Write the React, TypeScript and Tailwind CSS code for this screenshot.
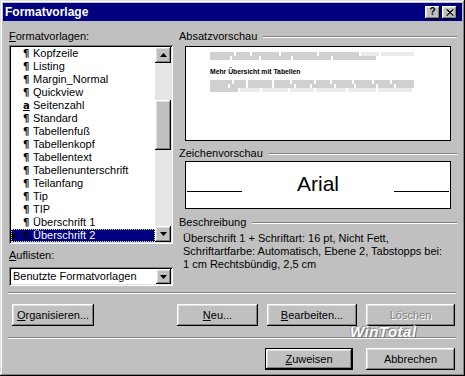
import React from 'react';

// Win9x bevels, written out in full so Tailwind picks them up.
const raised = 'bg-[#c0c0c0] shadow-[inset_-1px_-1px_#000,inset_1px_1px_#fff,inset_-2px_-2px_#808080,inset_2px_2px_#dfdfdf]';
const sunken = 'shadow-[inset_1px_1px_#808080,inset_-1px_-1px_#fff,inset_2px_2px_#000,inset_-2px_-2px_#dfdfdf]';

type Style = { name: string; kind: 'p' | 'a'; selected?: boolean };

const styles: Style[] = [
  { name: 'Kopfzeile', kind: 'p' },
  { name: 'Listing', kind: 'p' },
  { name: 'Margin_Normal', kind: 'p' },
  { name: 'Quickview', kind: 'p' },
  { name: 'Seitenzahl', kind: 'a' },
  { name: 'Standard', kind: 'p' },
  { name: 'Tabellenfuß', kind: 'p' },
  { name: 'Tabellenkopf', kind: 'p' },
  { name: 'Tabellentext', kind: 'p' },
  { name: 'Tabellenunterschrift', kind: 'p' },
  { name: 'Teilanfang', kind: 'p' },
  { name: 'Tip', kind: 'p' },
  { name: 'TIP', kind: 'p' },
  { name: 'Überschrift 1', kind: 'p' },
  { name: 'Überschrift 2', kind: 'p', selected: true },
];

// Greeked text in the paragraph preview: [width, dark?]
const greek: [number, boolean][][] = [
  [[24, true], [14, true], [27, true], [36, true], [40, true], [18, false], [33, false]],
  [[20, true], [27, true], [30, true], [38, true], [43, true]],
];
const greekAfter: [number, boolean][][] = [
  [[22, true], [12, true], [24, true], [16, true], [22, true], [14, true], [20, true], [18, true], [16, true], [22, true]],
  [[18, true], [16, true], [24, true], [20, true], [14, true], [22, true], [18, true], [20, true], [16, true], [18, true]],
  [[28, true], [20, false], [26, false], [24, false], [30, false], [28, false], [34, false]],
];

const GreekRow = ({ segs }: { segs: [number, boolean][] }) => (
  <div className="flex h-[4px] gap-[2px]">
    {segs.map(([w, dark], i) => (
      <div key={i} className={dark ? 'h-full bg-[#d0d0d0]' : 'h-full bg-[#ebebeb]'} style={{ width: w }} />
    ))}
  </div>
);

const ArrowUp = () => (
  <svg width="7" height="4" viewBox="0 0 7 4"><polygon points="3.5,0 7,4 0,4" fill="#000" /></svg>
);
const ArrowDown = () => (
  <svg width="7" height="4" viewBox="0 0 7 4"><polygon points="0,0 7,0 3.5,4" fill="#000" /></svg>
);

const GroupLabel = ({ text }: { text: string }) => (
  <div className="flex h-[13px] items-center leading-[13px]">
    <span>{text}</span>
    <div className="ml-[6px] h-[2px] flex-1 border-t border-b border-t-[#808080] border-b-white" />
  </div>
);

const Button = ({ children, w, disabled, isDefault }: { children: React.ReactNode; w: number; disabled?: boolean; isDefault?: boolean }) => (
  <div
    className={isDefault ? 'flex h-[22px] border border-black' : 'flex h-[22px]'}
    style={{ width: w }}
  >
    <div
      className={`${raised} flex flex-1 items-center justify-center ${disabled ? 'text-[#808080] [text-shadow:1px_1px_0_#fff]' : 'text-black'}`}
    >
      {children}
    </div>
  </div>
);

const Separator = () => <div className="ml-[5px] h-[2px] w-[448px] border-t border-b border-t-[#808080] border-b-white" />;

export default function App() {
  return (
    <div className="relative h-[376px] w-[465px] bg-[#c0c0c0] p-[3px] font-['Liberation_Sans',Arial,sans-serif] text-[11px] text-black shadow-[inset_-1px_-1px_#000,inset_1px_1px_#dfdfdf,inset_-2px_-2px_#808080,inset_2px_2px_#fff]">
      {/* Title bar */}
      <div className="flex h-[18px] items-center bg-[#000080] pl-[2px] pr-[5px]">
        <span className="flex-1 text-[12px] font-bold leading-[18px] text-white">Formatvorlage</span>
        <div className={`${raised} flex h-[13px] w-[15px] items-center justify-center text-[10px] font-bold leading-none`}>?</div>
        <div className={`${raised} ml-[2px] flex h-[13px] w-[15px] items-center justify-center`}>
          <svg width="8" height="7" viewBox="0 0 8 7">
            <path d="M0.5 0.5 L7 6.5 M1.5 0.5 L7.5 6.5 M7 0.5 L0.5 6.5 M7.5 0.5 L1 6.5" stroke="#000" strokeWidth="1" />
          </svg>
        </div>
      </div>

      {/* Body */}
      <div className="flex items-start pl-[6px] pt-[9px]">
        {/* Left column */}
        <div className="w-[164px]">
          <div className="h-[13px] leading-[13px]"><span className="underline">F</span>ormatvorlagen:</div>
          <div className={`${sunken} mt-[2px] flex h-[199px] bg-white p-[2px]`}>
            <div className="w-[144px]">
              {styles.map((s) => (
                <div
                  key={s.name}
                  className={s.selected ? 'flex h-[13px] items-center bg-[#000080] leading-[13px] text-white outline-1 -outline-offset-1 outline-dotted outline-[#e8e860]' : 'flex h-[13px] items-center leading-[13px]'}
                >
                  <div className="flex w-[12px] items-center pl-[1px]">
                    {s.selected && <div className="h-0 w-0 border-y-[4px] border-l-[5px] border-y-transparent border-l-black" />}
                  </div>
                  <div className={s.selected ? "w-[10px] font-['DejaVu_Sans',sans-serif] text-[10px] font-bold text-black" : "w-[10px] font-['DejaVu_Sans',sans-serif] text-[10px] font-bold"}>
                    {s.kind === 'p' ? '¶' : <span className="underline">a</span>}
                  </div>
                  <span className="whitespace-nowrap">{s.name}</span>
                </div>
              ))}
            </div>
            {/* Scrollbar */}
            <div className="flex w-[16px] flex-col bg-[#e6e6e6]">
              <div className={`${raised} flex h-[16px] items-center justify-center`}><ArrowUp /></div>
              <div className="h-[37px]" />
              <div className={`${raised} h-[50px]`} />
              <div className="flex-1" />
              <div className={`${raised} flex h-[16px] items-center justify-center`}><ArrowDown /></div>
            </div>
          </div>
          <div className="mt-[5px] h-[13px] leading-[13px]"><span className="underline">A</span>uflisten:</div>
          <div className={`${sunken} mt-[5px] flex h-[19px] items-center bg-white p-[2px]`}>
            <span className="flex-1 pl-[2px] leading-[13px]">Benutzte Formatvorlagen</span>
            <div className={`${raised} flex h-full w-[15px] items-center justify-center`}><ArrowDown /></div>
          </div>
        </div>

        {/* Right column */}
        <div className="ml-[6px] w-[278px]">
          <GroupLabel text="Absatzvorschau" />
          <div className="ml-[6px] mt-[3px] flex h-[95px] w-[266px] flex-col border border-black bg-white pl-[24px] pt-[5px]">
            {greek.map((r, i) => <GreekRow key={i} segs={r} />)}
            <div className="mt-[8px] h-[8px] whitespace-nowrap text-[6.8px] font-bold leading-[8px]">Mehr Übersicht mit Tabellen</div>
            <div className="mt-[4px] flex flex-col">
              {greekAfter.map((r, i) => <GreekRow key={i} segs={r} />)}
            </div>
          </div>

          <div className="mt-[6px]"><GroupLabel text="Zeichenvorschau" /></div>
          <div className="ml-[6px] mt-[1px] flex h-[48px] w-[266px] items-start border border-black bg-white px-[1px] pt-[10px]">
            <div className="h-[20px] w-[55px] border-b border-black" />
            <div className="flex-1 text-center text-[21px] leading-[24px]">Arial</div>
            <div className="h-[20px] w-[55px] border-b border-black" />
          </div>

          <div className="mt-[7px]"><GroupLabel text="Beschreibung" /></div>
          <div className="mt-[3px] pl-[4px] leading-[13px] whitespace-nowrap">
            <div>Überschrift 1 + Schriftart: 16 pt, Nicht Fett,</div>
            <div>Schriftartfarbe: Automatisch, Ebene 2, Tabstopps bei:</div>
            <div>1 cm Rechtsbündig, 2,5 cm</div>
          </div>
        </div>
      </div>

      {/* Lower button area */}
      <div className="mt-[6px]"><Separator /></div>
      <div className="mt-[10px] flex pl-[9px]">
        <Button w={82}><span><span className="underline">O</span>rganisieren...</span></Button>
        <div className="ml-[83px]"><Button w={81}><span><span className="underline">N</span>eu...</span></Button></div>
        <div className="ml-[9px]"><Button w={90}><span><span className="underline">B</span>earbeiten...</span></Button></div>
        <div className="ml-[9px]"><Button w={89} disabled>Löschen</Button></div>
      </div>
      <div className="mt-[11px]"><Separator /></div>
      <div className="mt-[9px] flex justify-end pr-[7px]">
        <Button w={88} isDefault><span><span className="underline">Z</span>uweisen</span></Button>
        <div className="ml-[13px]"><Button w={89}>Abbrechen</Button></div>
      </div>

      {/* WinTotal watermark */}
      <div className="absolute left-[350px] top-[324px] text-[15px] font-bold italic leading-[16px] tracking-[0.5px] text-white [text-shadow:1px_1px_0_#777,-1px_-1px_0_#999]">
        WinTotal
      </div>
    </div>
  );
}
